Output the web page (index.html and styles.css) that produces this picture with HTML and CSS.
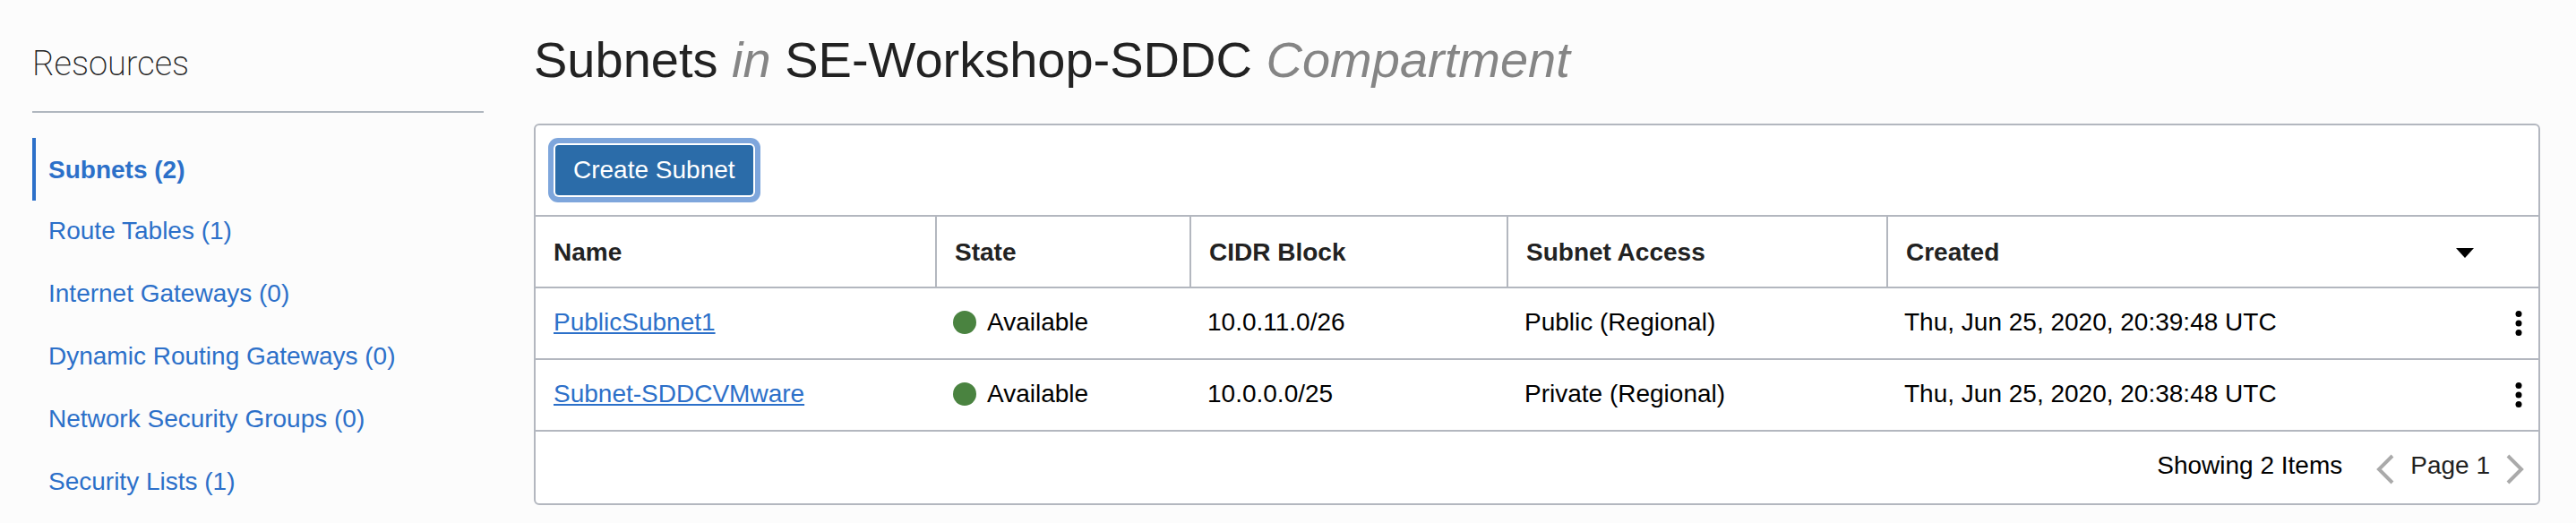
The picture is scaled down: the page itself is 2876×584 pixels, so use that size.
FILE: index.html
```html
<!DOCTYPE html>
<html lang="en">
<head>
<meta charset="utf-8">
<title>Subnets</title>
<link rel="stylesheet" href="styles.css">
</head>
<body>
<div class="page">
  <aside class="sidebar">
    <h2 class="sidebar-title">Resources</h2>
    <nav class="resource-nav" aria-label="Resources">
      <a class="resource-link is-active" href="#subnets">Subnets (2)</a>
      <a class="resource-link" href="#routes">Route Tables (1)</a>
      <a class="resource-link" href="#internet">Internet Gateways (0)</a>
      <a class="resource-link" href="#dynamic">Dynamic Routing Gateways (0)</a>
      <a class="resource-link" href="#groups">Network Security Groups (0)</a>
      <a class="resource-link" href="#lists">Security Lists (1)</a>
    </nav>
  </aside>
  <main class="content">
    <h1 class="title">Subnets <em>in</em> SE-Workshop-SDDC <em>Compartment</em></h1>
    <section class="panel">
      <div class="toolbar">
        <button class="create-button" type="button">Create Subnet</button>
      </div>
      <table class="subnet-table">
        <colgroup>
          <col class="col-name"><col class="col-state"><col class="col-cidr"><col class="col-access"><col><col class="col-actions">
        </colgroup>
        <thead>
          <tr>
            <th scope="col">Name</th>
            <th scope="col">State</th>
            <th scope="col">CIDR Block</th>
            <th scope="col">Subnet Access</th>
            <th scope="col" colspan="2" aria-sort="descending">
              <div class="sort-head">Created
                <svg class="sort-icon" viewBox="0 0 20 11" aria-hidden="true"><path d="M0 0H20L10 11Z"/></svg>
              </div>
            </th>
          </tr>
        </thead>
        <tbody>
          <tr>
            <td><a class="name-link" href="#public">PublicSubnet1</a></td>
            <td><span class="state"><span class="state-dot"></span>Available</span></td>
            <td>10.0.11.0/26</td>
            <td>Public (Regional)</td>
            <td>Thu, Jun 25, 2020, 20:39:48 UTC</td>
            <td class="actions"><button class="icon-button" type="button" aria-label="Actions for PublicSubnet1"><svg class="kebab" viewBox="0 0 8 28" aria-hidden="true"><circle cx="4" cy="3.5" r="3.5"/><circle cx="4" cy="14" r="3.5"/><circle cx="4" cy="24.5" r="3.5"/></svg></button></td>
          </tr>
          <tr>
            <td><a class="name-link" href="#vmware">Subnet-SDDCVMware</a></td>
            <td><span class="state"><span class="state-dot"></span>Available</span></td>
            <td>10.0.0.0/25</td>
            <td>Private (Regional)</td>
            <td>Thu, Jun 25, 2020, 20:38:48 UTC</td>
            <td class="actions"><button class="icon-button" type="button" aria-label="Actions for Subnet-SDDCVMware"><svg class="kebab" viewBox="0 0 8 28" aria-hidden="true"><circle cx="4" cy="3.5" r="3.5"/><circle cx="4" cy="14" r="3.5"/><circle cx="4" cy="24.5" r="3.5"/></svg></button></td>
          </tr>
        </tbody>
      </table>
      <footer class="pager">
        <span class="count">Showing 2 Items</span>
        <button class="icon-button" type="button" aria-label="Previous page"><svg class="chevron" viewBox="0 0 20 34" aria-hidden="true"><path d="M18 2L3 17L18 32"/></svg></button>
        <span class="page-number">Page 1</span>
        <button class="icon-button" type="button" aria-label="Next page"><svg class="chevron" viewBox="0 0 20 34" aria-hidden="true"><path d="M2 2L17 17L2 32"/></svg></button>
      </footer>
    </section>
  </main>
</div>
</body>
</html>
```
FILE: styles.css
```css
* {
  box-sizing: border-box;
}

body {
  margin: 0;
  background: #fcfcfc;
  color: #000;
  font: 28px/32px "Liberation Sans", Arial, sans-serif;
}

.page {
  display: flex;
  gap: 56px;
  padding: 36px 40px 8px 36px;
}

.sidebar {
  flex: 0 0 504px;
}

.sidebar-title {
  margin: 0;
  padding: 10px 0 28px;
  border-bottom: 2px solid #b0b7bf;
  color: #222;
  font: 200 38px/50px Roboto, "Liberation Sans", sans-serif;
}

.resource-nav {
  display: flex;
  flex-direction: column;
  margin-top: 28px;
}

.resource-link {
  padding: 18px 0 20px 18px;
  color: #2c70c9;
  text-decoration: none;
}

.resource-link.is-active {
  padding: 20px 0 18px 14px;
  border-left: 4px solid #2c70c9;
  font-weight: 700;
}

.content {
  flex: 1;
  min-width: 0;
}

.title {
  margin: 0 0 40px;
  color: #222;
  font-size: 56px;
  font-weight: 400;
  line-height: 62px;
}

.title em {
  color: #858585;
}

.panel {
  border: 2px solid #b3b7bf;
  border-radius: 6px;
  background: #fff;
}

.toolbar {
  padding: 22px;
  border-bottom: 2px solid #b3b7bf;
}

.create-button {
  display: block;
  height: 56px;
  padding: 0 20px;
  border: 0;
  border-radius: 4px;
  background: #2b6ca9;
  box-shadow: 0 0 0 2px #fff, 0 0 0 8px #7ea6dc;
  color: #fff;
  font: inherit;
}

.subnet-table {
  width: 100%;
  table-layout: fixed;
  border-collapse: separate;
  border-spacing: 0;
}

.col-name {
  width: 446px;
}

.col-state {
  width: 284px;
}

.col-cidr {
  width: 354px;
}

.col-access {
  width: 424px;
}

.col-actions {
  width: 44px;
}

.subnet-table th,
.subnet-table td {
  height: 80px;
  padding: 0 20px 2px;
  border-bottom: 2px solid #b3b7bf;
  text-align: left;
  vertical-align: middle;
}

.subnet-table th {
  padding: 2px 20px 0;
  color: #222;
}

.subnet-table th + th {
  border-left: 2px solid #b3b7bf;
}

.sort-head {
  display: flex;
  align-items: center;
  justify-content: space-between;
  padding-right: 52px;
}

.sort-icon {
  width: 20px;
  height: 11px;
  fill: #000;
}

.name-link {
  color: #2c70c9;
  text-decoration-thickness: 2px;
  text-underline-offset: 2px;
}

.state {
  display: flex;
  align-items: center;
  gap: 12px;
}

.state-dot {
  width: 26px;
  height: 26px;
  border-radius: 50%;
  background: #4a8340;
}

.icon-button {
  display: block;
  padding: 0;
  border: 0;
  background: none;
}

.subnet-table .actions {
  padding: 0 18px;
}

.kebab {
  display: block;
  width: 8px;
  height: 28px;
}

.pager {
  display: flex;
  align-items: center;
  justify-content: flex-end;
  height: 80px;
  padding: 0 16px 4px 0;
}

.pager .icon-button {
  margin-top: 8px;
}

.count {
  margin-right: 38px;
}

.page-number {
  margin: 0 18px;
  color: #222;
}

.chevron {
  display: block;
  width: 20px;
  height: 34px;
  fill: none;
  stroke: #aaa;
  stroke-width: 4;
}
```
